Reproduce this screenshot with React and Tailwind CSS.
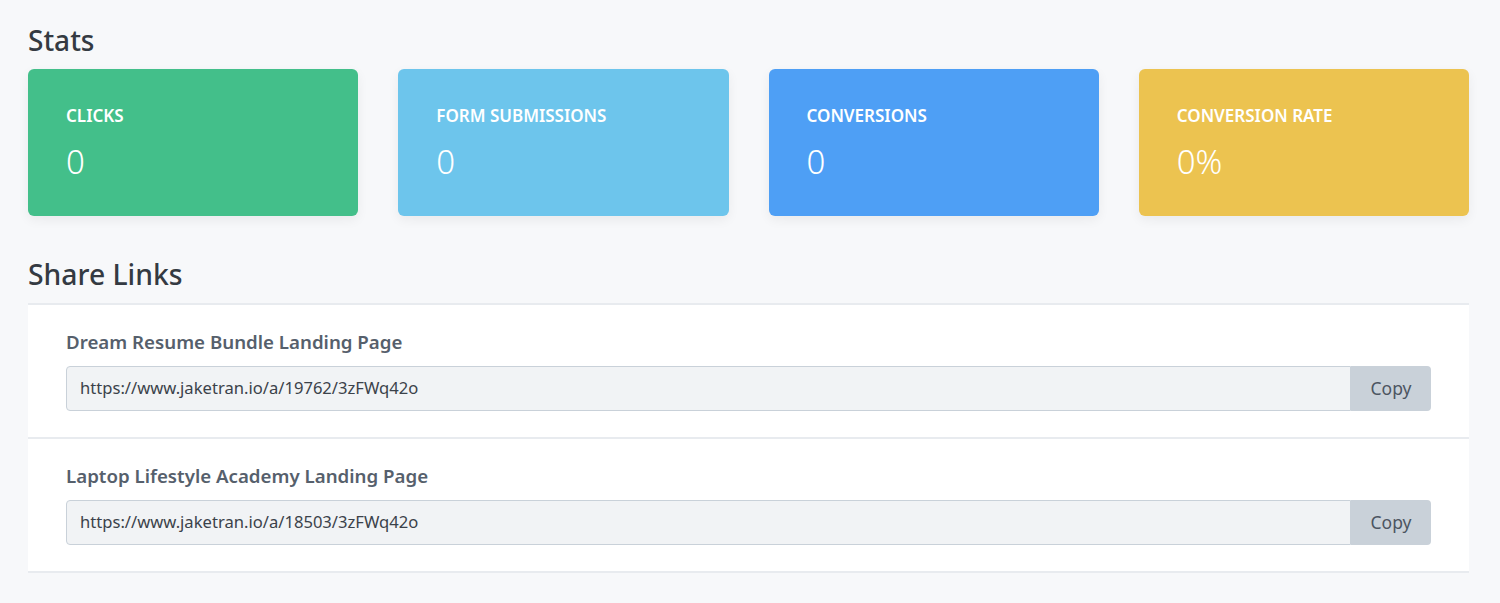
import React from 'react';

const stats = [
  { label: 'Clicks', value: '0', color: 'bg-[#43bf8a]' },
  { label: 'Form Submissions', value: '0', color: 'bg-[#6dc5ec]' },
  { label: 'Conversions', value: '0', color: 'bg-[#4e9ff5]' },
  { label: 'Conversion Rate', value: '0%', color: 'bg-[#ecc350]' },
];

const links = [
  { title: 'Dream Resume Bundle Landing Page', url: 'https://www.jaketran.io/a/19762/3zFWq42o' },
  { title: 'Laptop Lifestyle Academy Landing Page', url: 'https://www.jaketran.io/a/18503/3zFWq42o' },
];

const App = () => {
  return (
    <div
      className="min-h-[603px] bg-[#f7f8fa] px-[28px] pt-[22px] pb-8 text-[#343a42]"
      style={{ fontFamily: '"Noto Sans", "Open Sans", sans-serif' }}
    >
      {/* Stats */}
      <h2 className="text-[28px] font-medium leading-[36px]">Stats</h2>
      <div className="grid grid-cols-4 gap-[40px] mt-[11px] w-[1441px]">
        {stats.map((s) => (
          <div
            key={s.label}
            className={`${s.color} h-[147px] rounded-[6px] shadow-[0_4px_12px_rgba(0,0,0,0.06)] px-[38px] pt-[36px] text-white`}
          >
            <div className="text-[17px] font-semibold uppercase leading-[22px]">{s.label}</div>
            <div className="text-[33px] font-light leading-[40px] mt-[15px]">{s.value}</div>
          </div>
        ))}
      </div>

      {/* Share Links */}
      <h2 className="text-[28.3px] font-medium leading-[36px] mt-[40px]">Share Links</h2>
      <div className="mt-[11px] w-[1441px] bg-white border-t-2 border-[#e8ebef]">
        {links.map((l) => (
          <div key={l.url} className="px-[38px] pt-[23px] pb-[26px] border-b-2 border-[#e8ebef]">
            <div className="text-[18.7px] font-semibold text-[#56606c] leading-[28px]">{l.title}</div>
            <div className="flex mt-[10px] h-[45px]">
              <div className="flex-1 flex items-center bg-[#f1f3f5] border border-[#c9d1d9] rounded-l-[4px] px-[13px] text-[16.6px] text-[#3b424a]">
                {l.url}
              </div>
              <button
                type="button"
                className="w-[80px] bg-[#c9d1d9] rounded-r-[4px] text-[17.5px] text-[#4c5561]"
              >
                Copy
              </button>
            </div>
          </div>
        ))}
      </div>
    </div>
  );
};

export default App;
